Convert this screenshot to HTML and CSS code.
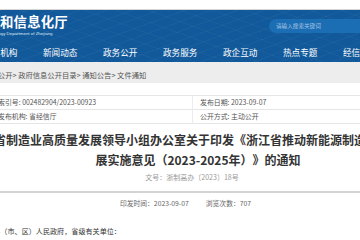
FILE: index.html
```html
<!DOCTYPE html>
<html lang="zh-CN">
<head>
<meta charset="utf-8">
<title>浙江省经济和信息化厅</title>
<link rel="stylesheet" href="styles.css">
</head>
<body>

<div class="topbar"></div>

<header class="masthead">
  <div class="brand-row">
    <div class="brand">
      <div class="brand-cn">浙江省经济和信息化厅</div>
      <div class="brand-en">Economy and Information Technology Department of Zhejiang</div>
    </div>
    <div class="search">请输入搜索关键词</div>
  </div>
  <nav class="nav">
    <span class="nav-item">首页</span>
    <span class="nav-item">组织机构</span>
    <span class="nav-item">新闻动态</span>
    <span class="nav-item">政务公开</span>
    <span class="nav-item">政务服务</span>
    <span class="nav-item">政企互动</span>
    <span class="nav-item">热点专题</span>
    <span class="nav-item">经信数据</span>
  </nav>
</header>

<div class="crumbs">
  <div class="crumbs-inner">首页&gt; 政务公开&gt; 政府信息公开目录&gt; 通知公告&gt; 文件通知</div>
</div>

<main class="article">
  <div class="meta">
    <div class="meta-cell">索引号: 002482904/2023-00923</div>
    <div class="meta-cell">发布日期: 2023-09-07</div>
    <div class="meta-cell">发布机构: 省经信厅</div>
    <div class="meta-cell">公开方式: 主动公开</div>
  </div>

  <h1 class="title">浙江省制造业高质量发展领导小组办公室关于印发《浙江省推动新能源制造业高质量发展实施意见（2023-2025年）》的通知</h1>

  <div class="docno">文号：浙制高办〔2023〕18号</div>

  <div class="info">
    <span>印发时间：2023-09-07</span>
    <span>浏览次数：707</span>
  </div>

  <p class="body-text">各市、县（市、区）人民政府，省级有关单位：</p>
</main>

</body>
</html>
```

FILE: styles.css
```css
* {
  box-sizing: border-box;
  margin: 0;
  padding: 0;
}

body {
  width: 360px;
  height: 240px;
  overflow: hidden;
  background: #fff;
  color: #333;
  font-family: "Noto Sans CJK SC", "Noto Sans", sans-serif;
  text-spacing-trim: space-all;
}

.topbar {
  height: 10px;
  background: #fff;
  border-bottom: 1px solid #d4d4d4;
}

/* header */
.masthead {
  height: 52px;
  background-color: #11599a;
  background-image:
    repeating-linear-gradient(160deg, rgba(255,255,255,0.035) 0 1px, transparent 1px 9px),
    repeating-linear-gradient(20deg, rgba(255,255,255,0.03) 0 1px, transparent 1px 11px);
  overflow: hidden;
}

.brand-row {
  display: flex;
  height: 30px;
}

.brand {
  margin-left: -68px;
  padding-top: 4px;
  color: #fff;
  white-space: nowrap;
}

.brand-cn {
  font-size: 13.4px;
  font-weight: bold;
  line-height: 14px;
  letter-spacing: 0.2px;
}

.brand-en {
  margin-top: 3px;
  font-family: "Liberation Sans", sans-serif;
  font-size: 4.4px;
  line-height: 5px;
  color: #dfe9f3;
}

.search {
  margin: 9px -12px 0 auto;
  width: 103px;
  height: 14px;
  padding-left: 7px;
  border-radius: 7px;
  background: #1b6db4;
  color: #a9c7e4;
  font-size: 5.6px;
  line-height: 14px;
  white-space: nowrap;
}

.nav {
  display: flex;
  align-items: center;
  height: 22px;
  padding-top: 2px;
  margin-left: -77px;
}

.nav-item {
  flex: none;
  width: 60px;
  color: #fff;
  font-size: 8.6px;
  white-space: nowrap;
}

/* breadcrumb */
.crumbs {
  height: 21px;
  padding-top: 8px;
  background: #ededed;
  overflow: hidden;
}

.crumbs-inner {
  margin-left: -37px;
  font-size: 7.3px;
  line-height: 10px;
  color: #555;
  white-space: nowrap;
}

/* article */
.article {
  width: 464px;
  margin-left: -40px;
}

.meta {
  display: grid;
  grid-template-columns: 204px 204px;
  width: 408px;
  margin: 12px 0 0 29px;
  border-top: 1px solid #e6e6e6;
}

.meta-cell {
  height: 14px;
  padding-left: 7px;
  border-bottom: 1px solid #e6e6e6;
  font-size: 6.9px;
  line-height: 13px;
  color: #555;
  white-space: nowrap;
}

.meta-cell:nth-child(odd) {
  padding-left: 9px;
  border-right: 1px solid #ececec;
}

.title {
  width: 458px;
  margin: 6px 0 0 9px;
  font-size: 12px;
  font-weight: bold;
  line-height: 20px;
  text-align: center;
  color: #333;
}

.docno {
  margin-top: 2px;
  font-size: 7px;
  line-height: 10px;
  text-align: center;
  color: #999;
}

.info {
  display: flex;
  justify-content: center;
  gap: 17px;
  margin-top: 9px;
  padding-top: 5px;
  padding-right: 13px;
  border-top: 2px solid #d3d3d3;
  font-size: 6.8px;
  line-height: 10px;
  color: #666;
}

.body-text {
  margin-top: 18px;
  padding-left: 12px;
  font-size: 7.1px;
  line-height: 10px;
  color: #333;
  white-space: nowrap;
}
```
